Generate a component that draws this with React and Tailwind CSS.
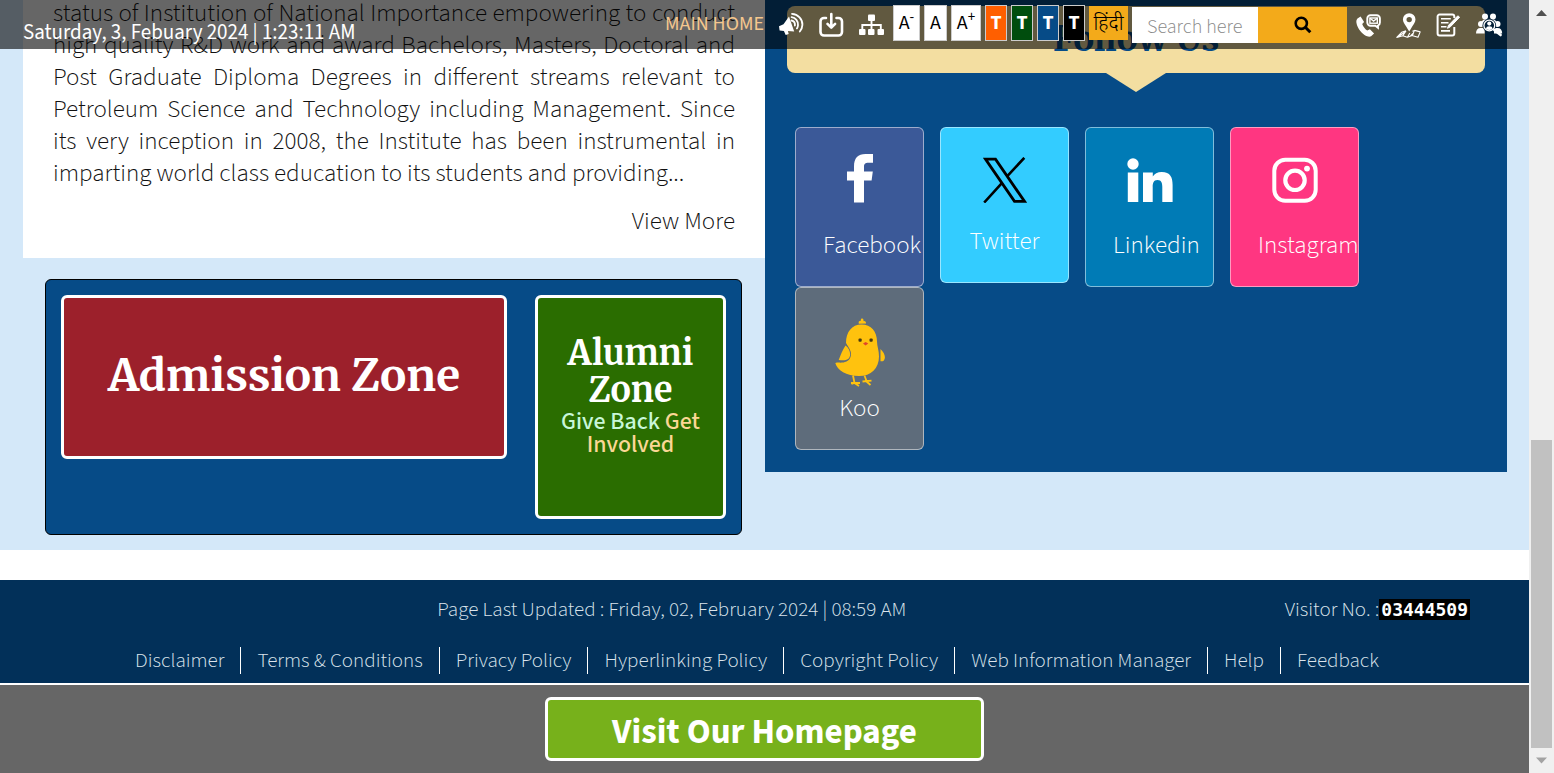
const ABOUT =
  "status of Institution of National Importance empowering to conduct high quality R&D work and award Bachelors, Masters, Doctoral and Post Graduate Diploma Degrees in different streams relevant to Petroleum Science and Technology including Management. Since its very inception in 2008, the Institute has been instrumental in imparting world class education to its students and providing...";

const FOOTER_LINKS = [
  "Disclaimer",
  "Terms & Conditions",
  "Privacy Policy",
  "Hyperlinking Policy",
  "Copyright Policy",
  "Web Information Manager",
  "Help",
  "Feedback",
];

const THEMES = [
  { label: "Orange theme", className: "bg-[#ff5f00]" },
  { label: "Green theme", className: "bg-[#004d0d]" },
  { label: "Blue theme", className: "bg-[#064b87]" },
  { label: "Black theme", className: "bg-black" },
];

function SpeakerIcon() {
  return (
    <svg viewBox="0 0 25 25" className="size-[25px]" fill="none" stroke="#fff" strokeWidth="1.8" strokeLinecap="round">
      <path d="M10 4.5 15.200 19.500l-6.300-.6.8 3-3 1-1.800-3.800L.6 18.500 0 14.200l4.500-2z" fill="#fff" stroke="none" />
      <path d="M12.500 8.500c2.300.4 3.700 2.200 3.400 5" />
      <path d="M12.600 5.200c4 .5 6.700 3.800 6.400 8-.1 1.200-.5 2.300-1.100 3.200" />
      <path d="M13 1.900c6 .4 10.600 5.200 10.400 11-.1 2.500-1.100 4.800-2.600 6.600" />
    </svg>
  );
}

function DownloadIcon() {
  return (
    <svg viewBox="0 0 25 25" className="size-[25px]" fill="none" stroke="#fff" strokeWidth="2.600" strokeLinecap="round" strokeLinejoin="round">
      <path d="M7 6H5a3.500 3.500 0 0 0-3.500 3.500V20A3.500 3.500 0 0 0 5 23.500h14.500A3.500 3.500 0 0 0 23 20V9.500A3.500 3.500 0 0 0 19.500 6h-2" />
      <path d="M12.300 2V15M8.500 11.800l3.800 3.800 3.800-3.800" />
    </svg>
  );
}

function SitemapIcon() {
  return (
    <svg viewBox="0 0 25 25" className="size-[25px]" fill="#fff">
      <rect x="9" y="2.500" width="7" height="6.500" rx="1" />
      <rect x="0" y="17" width="6.500" height="6" rx="1" />
      <rect x="9" y="17" width="6.500" height="6" rx="1" />
      <rect x="18.500" y="17" width="6.500" height="6" rx="1" />
      <path d="M3.300 17v-4h18.500v4M12.500 8v9" fill="none" stroke="#fff" strokeWidth="1.900" />
    </svg>
  );
}

function ContactIcon() {
  return (
    <svg viewBox="0 0 25 25" className="size-[25px]" fill="none" stroke="#fff">
      <path d="M1.500 6.500 4.600 4.600l3.500 5.300-1.900 2.100c1 2.700 2.600 4.800 5 6.500l2.700-1.300 4.200 4.300-3 2.800c-1.600.8-4 .4-6.600-1.300C4.500 20.100 1 15.300.4 10.600c-.2-1.700.2-3.200 1.100-4.100z" fill="#fff" stroke="none" />
      <path d="M14.500 3.300h6.200a3.200 3.200 0 0 1 3.200 3.200v4a3.200 3.200 0 0 1-1.900 3v2.300l-2.600-2.100h-4.900a3.200 3.200 0 0 1-3.200-3.200v-4a3.200 3.200 0 0 1 3.200-3.200z" strokeWidth="1.900" />
      <rect x="13.900" y="6" width="7.400" height="5.200" strokeWidth="1.400" />
      <path d="m14 6.300 3.600 2.700 3.600-2.700" strokeWidth="1.400" />
    </svg>
  );
}

function LocationIcon() {
  return (
    <svg viewBox="0 0 25 27" className="h-[27px] w-[25px]" fill="none" stroke="#fff">
      <path d="M13.200 1.200a6.300 6.300 0 0 1 6.300 6.300c0 3-2.800 5.800-4.600 9.200l-1.700 2.800-1.700-2.800c-1.800-3.400-4.600-6.200-4.600-9.200a6.300 6.300 0 0 1 6.300-6.300zm0 3.700a2.700 2.700 0 1 0 0 5.400 2.700 2.700 0 0 0 0-5.400z" fill="#fff" stroke="none" />
      <path d="M10 18.800 5.600 20.300.8 25.400l6-1.700 4.600 1.500 4.600-1.800 6 1.900 2.200-5.400-5.600-1.500-2.200.8M6.800 23.600l3.200-4.700M11.600 25l2.200-4M16.600 23.300l1.600-4.400M3 24l6-4M14.500 24l3-3" strokeWidth="1.100" strokeLinejoin="round" />
    </svg>
  );
}

function FormIcon() {
  return (
    <svg viewBox="0 0 25 25" className="size-[25px]" fill="none" stroke="#fff" strokeWidth="2">
      <path d="M18.300 6V4.500a2 2 0 0 0-2-2H3.600a2 2 0 0 0-2 2v17a2 2 0 0 0 2 2h12.700a2 2 0 0 0 2-2V15" />
      <path d="M5 6.800h9.800M5 10.800h7.500M5 14.800h5.500M5 18.900h9" strokeWidth="1.600" />
      <path d="m23.600 5.200-9.200 9.600-2.900 1.500 1-3 9.300-9.500z" fill="#fff" strokeWidth="1" />
    </svg>
  );
}

function PeopleIcon() {
  return (
    <svg viewBox="0 0 27 25" className="h-[25px] w-[27px]" fill="#fff">
      <circle cx="9" cy="4.600" r="3" />
      <circle cx="17" cy="4.600" r="3" />
      <path d="M6 11.500c-.5-2.800.8-4 3-4h8c2.200 0 3.500 1.200 3 4z" />
      <circle cx="5" cy="12" r="3" />
      <circle cx="21.500" cy="12" r="3" />
      <path d="M0 21.500c0-3.500 1.500-5.500 4.600-5.500h4v5.500zM18 21.500V16h3.600c3 0 4.600 2 4.600 5.500z" />
      <circle cx="13.300" cy="13.500" r="6.800" fill="#021e36" />
      <circle cx="13.300" cy="13.500" r="5.400" fill="none" stroke="#fff" strokeWidth="1.300" />
      <circle cx="13.300" cy="11.600" r="2.100" />
      <path d="M10 17c.2-2 1.300-2.700 3.300-2.700s3.100.7 3.300 2.700c-1.900 1.300-4.700 1.300-6.600 0z" />
      <path d="m18.300 18 6.300 5" stroke="#fff" strokeWidth="2.600" strokeLinecap="round" />
    </svg>
  );
}

function SearchIcon() {
  return (
    <svg viewBox="0 0 18 18" className="size-[18px]" fill="none" stroke="#000" strokeWidth="2.600">
      <circle cx="7.300" cy="7.300" r="5.600" />
      <path d="m11.300 11.300 5 5" strokeWidth="3" />
    </svg>
  );
}

function FacebookIcon() {
  return (
    <svg viewBox="0 0 26 50" className="h-[50px] w-[26px]" fill="#fff">
      <path d="M7 49.500V27.500H0v-9h7v-5C7 5 11 1 18.500 1H26v8.800h-4.500c-3.300 0-4.500 1.200-4.500 4.200v4.500h8.800l-1.200 9H17v22z" />
    </svg>
  );
}

function XIcon() {
  return (
    <svg viewBox="0 0 44 46" className="h-[46px] w-11" fill="none" stroke="#000" strokeWidth="2.600">
      <path d="M2.600 2.200h9.900L41.400 44.300h-9.900z" strokeWidth="2.800" />
      <path d="M1.200 45.500 19.300 25.600M24.300 19.200 41.300.8" />
    </svg>
  );
}

function LinkedinIcon() {
  return (
    <svg viewBox="0 0 46 45" className="h-[45px] w-[46px]" fill="#fff">
      <circle cx="6" cy="6" r="5.700" />
      <path d="M.8 14.600h10.500V44H.8zM16 14.600h9.800v3.900c1.500-2.700 4.700-4.600 8.900-4.600 8.700 0 10.900 5.400 10.900 13.200V44H35.300V29c0-3.500-.6-7-4.800-7s-4.800 3.600-4.800 7v15H16z" />
    </svg>
  );
}

function InstagramIcon() {
  return (
    <svg viewBox="0 0 46 46" className="size-[46px]" fill="none" stroke="#fff">
      <rect x="2.300" y="2.800" width="41.400" height="41" rx="11" strokeWidth="4" />
      <circle cx="23" cy="23.300" r="9.700" strokeWidth="4.200" />
      <circle cx="35" cy="11.600" r="2.900" fill="#fff" stroke="none" />
    </svg>
  );
}

function KooIcon() {
  return (
    <svg viewBox="0 0 50 70" className="h-[70px] w-[50px]" fill="#ffc20e">
      <path d="M27 .2c1.800.8 1.800 2 1.300 3 1.700-.5 3 .5 2.700 2.300l-7.200.2c-.6-2 .4-3 2.200-2.800-.4-1.100 0-2.200 1-2.700z" />
      <path d="M26.500 6.500c9.700 0 15.500 7.200 15.500 17 0 4.500 2 9 2 15C44 50.500 36 58 24 58 11.500 58 2 52 .3 45c3.200-1 7 .5 11.200-1.500 3.500-1.700 5-5 4.300-9.500C15 30.500 12 27 11 25c0-11 5.800-18.500 15.500-18.500z" />
      <path d="M10.500 27.500c5.500 4 6.500 12.500 1 14.300-2.600.8-5.300.4-7.800.2 2-5 3.800-10 6.800-14.500zM45.500 31c4.500 4.500 5.500 8.800 3.300 11.500-.8.900-2 .9-3.300.8z" />
      <path d="M18 57.500 19.500 65M16 65h9M19.500 65l4.500 3M19.500 65l-3 1M29.500 57.500l2 5.500M27.500 63.500l9-.8M31.500 63.500l4 3.500" fill="none" stroke="#ffc20e" strokeWidth="1.800" />
      <rect x="23.500" y="20.500" width="3.200" height="3.200" rx="1" fill="#4a3a10" />
      <rect x="34.500" y="20.500" width="3.200" height="3.200" rx="1" fill="#4a3a10" />
      <path d="m28 25.500 2.600-1.500 2.700 1.500-2.700 1.900z" fill="#e0452b" />
    </svg>
  );
}

const socialCard = "flex w-[129px] flex-col rounded-md border border-white/50 py-[25px] text-[25px] leading-8 font-light text-white";

function SocialLinks() {
  return (
    <div className="flex flex-wrap items-start gap-x-4">
      <a href="#facebook" className={`${socialCard} bg-[#3b5998]`}>
        <span className="mb-[26px] flex h-[50px] items-center justify-center"><FacebookIcon /></span>
        <span className="pl-[27px] whitespace-nowrap">Facebook</span>
      </a>
      <a href="#twitter" className={`${socialCard} bg-[#33ccff]`}>
        <span className="mb-[22px] flex h-[50px] items-end justify-center"><XIcon /></span>
        <span className="text-center">Twitter</span>
      </a>
      <a href="#linkedin" className={`${socialCard} bg-[#007bb6]`}>
        <span className="mb-[26px] flex h-[50px] items-end justify-center"><LinkedinIcon /></span>
        <span className="pl-[27px] whitespace-nowrap">Linkedin</span>
      </a>
      <a href="#instagram" className={`${socialCard} bg-[#ff3681]`}>
        <span className="mb-[26px] flex h-[50px] items-end justify-center"><InstagramIcon /></span>
        <span className="pl-[27px] whitespace-nowrap">Instagram</span>
      </a>
      <a href="#koo" className={`${socialCard} bg-[#5e6c7b]`}>
        <span className="mb-1 flex h-[75px] items-end justify-center"><KooIcon /></span>
        <span className="text-center">Koo</span>
      </a>
    </div>
  );
}

function TopBar() {
  return (
    <header className="absolute inset-x-0 top-0 flex h-[49px] items-start justify-between bg-black/60 pr-[26px] pl-[23px]">
      <time className="pt-[18px] text-[21px] leading-7 text-white">Saturday, 3, Febuary 2024 | 1:23:11 AM</time>
      <nav className="flex items-start">
        <a href="#main" className="mt-[10px] mr-[15px] text-xl leading-7 text-[#f5c78e]">MAIN HOME</a>
        <div className="mt-3 mr-[9px] flex gap-[15px]">
          <a href="#audio" aria-label="Screen reader"><SpeakerIcon /></a>
          <a href="#downloads" aria-label="Downloads"><DownloadIcon /></a>
          <a href="#sitemap" aria-label="Sitemap"><SitemapIcon /></a>
        </div>
        <div className="mt-[5px] mr-1 flex gap-1 text-xl leading-[34px] text-black">
          <button type="button" className="h-9 w-[27px] border border-[#ccc] bg-white">A<sup className="text-[15px]">-</sup></button>
          <button type="button" className="h-9 w-[23px] border border-[#ccc] bg-white">A</button>
          <button type="button" className="h-9 w-[30px] border border-[#ccc] bg-white">A<sup className="text-[15px]">+</sup></button>
          {THEMES.map((t) => (
            <button key={t.label} type="button" aria-label={t.label} className={`h-9 w-[22px] border border-[#ccc] font-bold text-white ${t.className}`}>T</button>
          ))}
          <a href="#hindi" className="mt-px h-[34px] w-[39px] bg-[#f3aa1a] text-center font-['Noto_Sans',sans-serif] font-light">हिंदी</a>
        </div>
        <form className="mt-[7px] mr-[9px] flex h-9">
          <input aria-label="Search" placeholder="Search here" className="w-[126px] bg-white pt-1 pl-[15px] text-xl font-light placeholder:text-[#888]" />
          <button type="button" aria-label="Submit search" className="flex w-[89px] items-center justify-center bg-[#f3aa1a]"><SearchIcon /></button>
        </form>
        <div className="mt-3 flex gap-[15px]">
          <a href="#contact" aria-label="Contact"><ContactIcon /></a>
          <a href="#location" aria-label="Location"><LocationIcon /></a>
          <a href="#forms" aria-label="Forms"><FormIcon /></a>
          <a href="#people" aria-label="People"><PeopleIcon /></a>
        </div>
      </nav>
    </header>
  );
}

function Scrollbar() {
  return (
    <div aria-hidden="true" className="flex w-[25px] shrink-0 flex-col items-center bg-[#f0f0f0]">
      <svg viewBox="0 0 25 25" className="h-[25px] w-[25px]"><path d="M7 16h11l-5.500-6z" fill="#505050" /></svg>
      <div className="flex-[415]" />
      <div className="w-[21px] flex-[308] bg-[#c1c1c1]" />
      <svg viewBox="0 0 25 25" className="h-[25px] w-[25px]"><path d="M7 9.500h11l-5.500 6z" fill="#a3a3a3" /></svg>
    </div>
  );
}

export default function App() {
  return (
    <div className="flex min-h-screen bg-white font-['Source_Sans_3','Noto_Sans',sans-serif]">
      <div className="relative flex min-w-0 flex-1 flex-col">
        <main className="grid grid-cols-2 items-start bg-[#d4e8f9] pr-[22px] pb-[15px] pl-[23px]">
          <div>
            <section className="bg-white px-[30px] pb-[21px] text-[25px] leading-8 font-light text-[#111]">
              <p className="-mt-[3px] text-justify">{ABOUT}</p>
              <p className="pt-4 text-right"><a href="#more">View More</a></p>
            </section>
            <section className="mt-[21px] mr-[23px] ml-[22px] grid grid-cols-[7fr_3fr] items-start gap-7 rounded-md border border-black bg-[#064b87] p-[15px] text-center">
              <a href="#admission" className="flex h-[164px] items-center justify-center rounded-md border-3 border-white bg-[#9c202b] pb-0.5 font-['Merriweather',serif] text-[44px] leading-[50px] font-bold text-white">Admission Zone</a>
              <a href="#alumni" className="h-[224px] rounded-md border-3 border-white bg-[#2a6d00] px-4 pt-[37px]">
                <span className="block font-['Merriweather',serif] text-[34px] leading-[37px] font-bold text-white">Alumni Zone</span>
                <span className="block pt-px text-[24px] leading-[23px] font-medium text-[#c8f7d9]">Give Back <span className="text-[#fbd795]">Get Involved</span></span>
              </a>
            </section>
          </div>
          <section className="bg-[#064b87] pt-1.5 pb-[22px]">
            <div className="mx-[22px] h-[67px] rounded-lg bg-[#f3dea1] text-center">
              <h2 className="pt-2 font-['Merriweather',serif] text-[35px] leading-[50px] font-bold text-[#064b87]">Follow Us</h2>
            </div>
            <svg viewBox="0 0 60 19" className="mx-auto h-[19px] w-[60px]"><path d="M0 0h60L30 19z" fill="#f3dea1" /></svg>
            <div className="px-[30px] pt-[35px]"><SocialLinks /></div>
          </section>
        </main>
        <footer className="mt-[30px] bg-[#023059] pt-[15px] pb-[9px] text-[21px] leading-7 font-light text-[#dbe4ec]">
          <div className="flex px-[59px]">
            <p className="flex-1 text-center">Page Last Updated : Friday, 02, February 2024 | 08:59 AM</p>
            <p className="flex items-center">Visitor No. :
              <span className="h-[21px] bg-black px-[2px] font-['DejaVu_Sans_Mono',monospace] text-[18px] leading-[21px] font-bold text-white">03444509</span>
            </p>
          </div>
          <ul className="mt-6 flex justify-center pr-[15px]">
            {FOOTER_LINKS.map((name) => (
              <li key={name} className="border-r border-white px-4 leading-[27px] last:border-r-0"><a href="#policy">{name}</a></li>
            ))}
          </ul>
        </footer>
        <div className="flex flex-1 justify-center border-t-2 border-white bg-[#666] py-3">
          <a href="#home" className="h-16 w-[439px] rounded-md border-3 border-white bg-[#77b11b] text-center text-[35px] leading-[64px] font-bold text-white">Visit Our Homepage</a>
        </div>
        <TopBar />
      </div>
      <Scrollbar />
    </div>
  );
}
